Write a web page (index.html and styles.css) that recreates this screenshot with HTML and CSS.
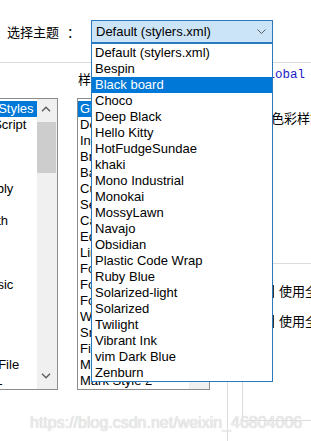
FILE: index.html
```html
<!DOCTYPE html>
<html lang="zh-CN">
<head>
<meta charset="utf-8">
<title>Style Configurator</title>
<link rel="stylesheet" href="styles.css">
</head>
<body>
<div class="dialog">
  <div class="theme-bar">
    <span class="theme-label">选择主题<span class="colon">：</span></span>
    <div class="combo">
      <span class="combo-text">Default (stylers.xml)</span>
      <svg class="chevron" width="10" height="6" viewBox="0 0 10 6"><polyline points="0.5,0.5 4.5,4.5 8.5,0.5" fill="none" stroke="#5a5a5a" stroke-width="1"/></svg>
    </div>
  </div>

  <div class="style-row">
    <span class="style-label">样式：</span>
    <span class="style-name">Global override</span>
  </div>

  <div class="panes">
    <div class="listbox lang-list">
      <ul class="items">
        <li class="selected">Global Styles</li>
        <li>ActionScript</li>
        <li>ADA</li>
        <li>ASN.1</li>
        <li>ASP</li>
        <li>Assembly</li>
        <li>AutoIt</li>
        <li>AviSynth</li>
        <li>BaanC</li>
        <li>bash</li>
        <li>Batch</li>
        <li>BlitzBasic</li>
        <li>C</li>
        <li>C#</li>
        <li>C++</li>
        <li>Caml</li>
        <li>CMakeFile</li>
        <li>COBOL</li>
      </ul>
      <div class="vscroll">
        <div class="arrow">
          <svg width="10" height="6" viewBox="0 0 10 6"><polyline points="1,5.2 5,1.2 9,5.2" fill="none" stroke="#606060" stroke-width="1.5"/></svg>
        </div>
        <div class="thumb"></div>
        <div class="arrow arrow-down">
          <svg width="10" height="6" viewBox="0 0 10 6"><polyline points="1,0.8 5,4.8 9,0.8" fill="none" stroke="#606060" stroke-width="1.5"/></svg>
        </div>
      </div>
    </div>

    <div class="listbox style-list">
      <ul class="items">
        <li class="selected">Global override</li>
        <li>Default Style</li>
        <li>Indent guideline style</li>
        <li>Brace highlight style</li>
        <li>Bad brace colour</li>
        <li>Current line background colour</li>
        <li>Selected text colour</li>
        <li>Caret colour</li>
        <li>Edge colour</li>
        <li>Line number margin</li>
        <li>Fold</li>
        <li>Fold active</li>
        <li>Fold margin</li>
        <li>White space symbol</li>
        <li>Smart HighLighting</li>
        <li>Find Mark Style</li>
        <li>Mark Style 1</li>
        <li>Mark Style 2</li>
      </ul>
      <div class="vscroll"></div>
    </div>

    <div class="right-panel">
      <div class="colour-group">
        <div class="legend">色彩样式</div>
        <div class="font-group">
          <div class="check-row"><span class="checkbox"></span><span>使用全局前景色</span></div>
          <div class="check-row"><span class="checkbox"></span><span>使用全局背景色</span></div>
        </div>
      </div>
    </div>
  </div>

  <ul class="dropdown">
    <li>Default (stylers.xml)</li>
    <li>Bespin</li>
    <li class="selected">Black board</li>
    <li>Choco</li>
    <li>Deep Black</li>
    <li>Hello Kitty</li>
    <li>HotFudgeSundae</li>
    <li>khaki</li>
    <li>Mono Industrial</li>
    <li>Monokai</li>
    <li>MossyLawn</li>
    <li>Navajo</li>
    <li>Obsidian</li>
    <li>Plastic Code Wrap</li>
    <li>Ruby Blue</li>
    <li>Solarized-light</li>
    <li>Solarized</li>
    <li>Twilight</li>
    <li>Vibrant Ink</li>
    <li>vim Dark Blue</li>
    <li>Zenburn</li>
  </ul>

  <div class="watermark">https://blog.csdn.net/weixin_46804006</div>
</div>
</body>
</html>
```

FILE: styles.css
```css
html, body {
  margin: 0;
  padding: 0;
  background: #ffffff;
}

body {
  font-family: "Liberation Sans", "Noto Sans CJK SC", sans-serif;
  font-size: 13px;
  line-height: 16px;
  color: #000000;
}

.dialog {
  position: relative;
  width: 311px;
  height: 441px;
  overflow: hidden;
  background: #ffffff;
}

ul {
  margin: 0;
  padding: 0;
  list-style: none;
}

/* top theme selector */
.theme-bar {
  display: flex;
  align-items: center;
  height: 42px;
  padding: 20px 0 0 7px;
  border-bottom: 1px solid #dcdcdc;
}

.theme-label {
  width: 84px;
  flex-shrink: 0;
  font-family: "Noto Sans CJK SC", sans-serif;
  font-size: 13px;
  line-height: 16px;
  white-space: nowrap;
  margin-top: -19px;
}

.colon {
  margin-left: 8px;
}

.combo {
  box-sizing: border-box;
  width: 182px;
  flex-shrink: 0;
  height: 23px;
  margin-top: -19px;
  display: flex;
  align-items: center;
  justify-content: space-between;
  padding: 0 5px 0 4px;
  background: #cce4f7;
  border: 1px solid #2a79bd;
}

.combo-text {
  white-space: nowrap;
}

.chevron {
  display: block;
}

/* style label row */
.style-row {
  display: flex;
  align-items: flex-start;
  height: 35px;
  padding-left: 78px;
}

.style-label {
  width: 182px;
  flex-shrink: 0;
  margin-top: 8px;
  font-family: "Noto Sans CJK SC", sans-serif;
  white-space: nowrap;
}

.style-name {
  flex-shrink: 0;
  margin-top: 4px;
  font-family: "Liberation Mono", monospace;
  font-size: 12.5px;
  color: #1a1ac4;
  white-space: nowrap;
}

/* panes */
.panes {
  display: flex;
  align-items: flex-start;
}

.listbox {
  box-sizing: border-box;
  display: flex;
  height: 292px;
  border: 1px solid #8c8c8c;
  background: #ffffff;
  overflow: hidden;
  flex-shrink: 0;
}

.lang-list {
  width: 104px;
  margin-left: -46px;
}

.style-list {
  width: 133px;
  margin-left: 19px;
}

.items {
  flex: 1;
  min-width: 0;
  padding-top: 2px;
  overflow: hidden;
}

.items li {
  height: 16px;
  padding-left: 2px;
  white-space: nowrap;
  overflow: hidden;
}

.items li.selected {
  background: #0078d7;
  color: #ffffff;
}

.vscroll {
  width: 20px;
  flex-shrink: 0;
  background: #f0f0f0;
  display: flex;
  flex-direction: column;
}

.arrow {
  height: 20px;
  display: flex;
  justify-content: center;
  align-items: center;
  padding-right: 2px;
}

.arrow-down {
  margin-top: auto;
  height: 16px;
  align-items: flex-start;
  padding-top: 2px;
}

.thumb {
  height: 51px;
  margin: 3px 1px 0 0;
  background: #cdcdcd;
}

/* right column */
.right-panel {
  flex: 1;
  min-width: 0;
  white-space: nowrap;
}

.colour-group {
  margin: 12px 0 0 17px;
  height: 400px;
  border-left: 1px solid #dcdcdc;
}

.legend {
  padding-left: 43px;
  font-family: "Noto Sans CJK SC", sans-serif;
}

.font-group {
  box-sizing: border-box;
  margin: 137px 0 0 14px;
  height: 158px;
  width: 200px;
  border: 1px solid #dcdcdc;
  border-right: none;
  padding: 19px 0 0 18px;
  display: flex;
  flex-direction: column;
  gap: 14px;
}

.check-row {
  display: flex;
  align-items: center;
  height: 16px;
  font-family: "Noto Sans CJK SC", sans-serif;
}

.checkbox {
  box-sizing: border-box;
  width: 13px;
  height: 13px;
  border: 1px solid #333333;
  background: #ffffff;
  margin-right: 5px;
  flex-shrink: 0;
}

/* open drop-down list */
.dropdown {
  position: absolute;
  left: 91px;
  top: 43px;
  box-sizing: border-box;
  width: 182px;
  padding-top: 1px;
  border: 1px solid #2a79bd;
  background: #ffffff;
}

.dropdown li {
  height: 16px;
  padding-left: 3px;
  white-space: nowrap;
}

.dropdown li.selected {
  background: #0078d7;
  color: #ffffff;
}

/* watermark */
.watermark {
  position: absolute;
  left: 30px;
  top: 415px;
  font-family: "Liberation Sans", sans-serif;
  font-size: 16px;
  line-height: 16px;
  color: #ececec;
  text-shadow: 0 0 1px #bdbdbd;
  white-space: nowrap;
}
```
